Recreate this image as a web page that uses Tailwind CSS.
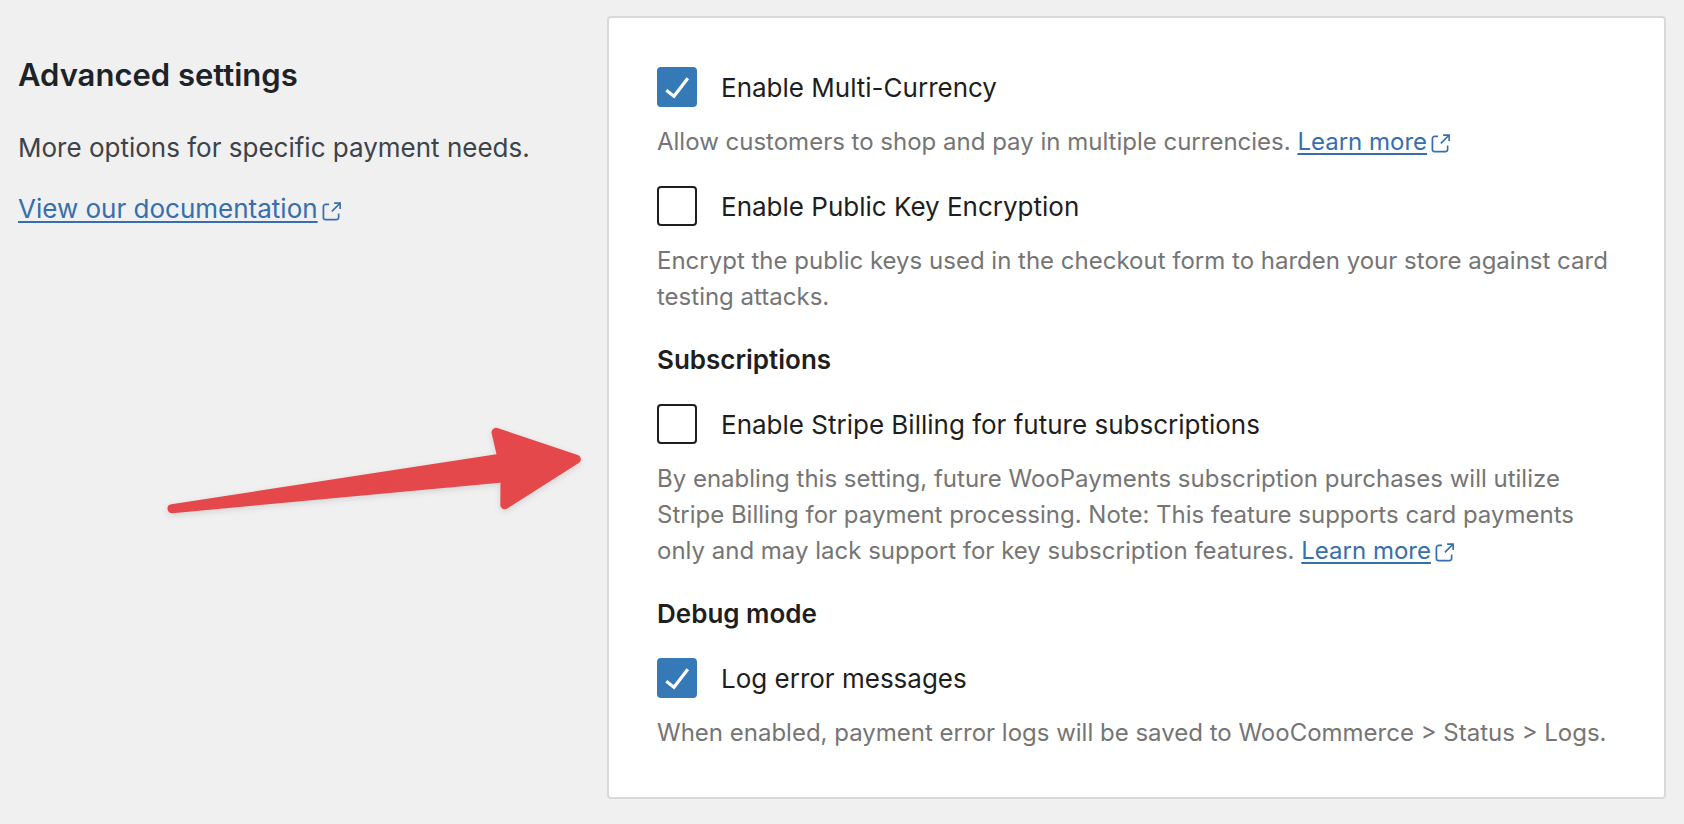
<!DOCTYPE html>
<html lang="en">
<head>
    <meta charset="UTF-8">
    <meta name="viewport" content="width=device-width, initial-scale=1.0">
    <title>Advanced settings</title>
    <script src="https://cdn.jsdelivr.net/npm/@tailwindcss/browser@4"></script>
</head>
<body class="relative min-h-screen bg-[#f0f0f0] font-['Inter','Liberation_Sans',sans-serif] text-[#1e1e1e]">
    <!-- Shared icons -->
    <svg class="hidden">
        <symbol id="external" viewBox="0 0 24 24">
            <path d="M18.2 17c0 .7-.6 1.2-1.2 1.2H7c-.7 0-1.2-.6-1.2-1.2V7c0-.7.6-1.2 1.2-1.2h3.2V4.2H7C5.5 4.2 4.2 5.5 4.2 7v10c0 1.5 1.2 2.8 2.8 2.8h10c1.5 0 2.8-1.2 2.8-2.8v-3.6h-1.5V17zM14.9 3v1.5h3.7l-6.4 6.4 1.1 1.1 6.4-6.4v3.7h1.5V3h-6.3z"></path>
        </symbol>
        <symbol id="check" viewBox="0 0 40 40">
            <path d="M9.3 23.2l7.7 6L30.8 11.2" fill="none" stroke="currentColor" stroke-width="3.2"></path>
        </symbol>
    </svg>

    <main class="flex items-start py-4 pr-[18px]">
        <!-- Section description -->
        <section class="w-[607px] shrink-0 pl-[18px] pr-6 pt-10">
            <h2 class="text-[31px] leading-[38px] font-semibold text-[#1d2327]">Advanced settings</h2>
            <p class="mt-9 text-[26px] leading-9 text-[#3c434a]">More options for specific payment needs.</p>
            <p class="mt-[25px] text-[26px] leading-9 text-[#366eae]">
                <a href="#" class="whitespace-nowrap"><span class="underline decoration-2 underline-offset-3">View our documentation</span><svg class="inline-block size-[26px] fill-current align-[-7px]"><use href="#external"></use></svg></a>
            </p>
        </section>

        <!-- Settings card -->
        <section class="min-w-0 flex-1 rounded border-2 border-[#d9d9d9] bg-white px-12 pb-[46px] pt-[49px]">
            <div>
                <div class="flex items-center gap-6">
                    <span class="grid size-10 shrink-0">
                        <input type="checkbox" id="multiCurrency" checked aria-describedby="multiCurrencyHelp" class="peer col-start-1 row-start-1 size-10 appearance-none rounded border-2 border-[#1e1e1e] bg-white checked:border-[#357ab6] checked:bg-[#357ab6]">
                        <svg class="pointer-events-none invisible col-start-1 row-start-1 size-10 text-white peer-checked:visible"><use href="#check"></use></svg>
                    </span>
                    <label for="multiCurrency" class="pt-0.5 text-[26px] leading-9">Enable Multi-Currency</label>
                </div>
                <p id="multiCurrencyHelp" class="mt-[17px] text-[24px] leading-9 text-[#757575]">Allow customers to shop and pay in multiple currencies. <a href="#" class="whitespace-nowrap text-[#366eae]"><span class="underline decoration-2 underline-offset-3">Learn more</span><svg class="inline-block size-[26px] fill-current align-[-7px]"><use href="#external"></use></svg></a></p>
            </div>

            <div class="mt-[26px]">
                <div class="flex items-center gap-6">
                    <span class="grid size-10 shrink-0">
                        <input type="checkbox" id="publicKey" aria-describedby="publicKeyHelp" class="peer col-start-1 row-start-1 size-10 appearance-none rounded border-2 border-[#1e1e1e] bg-white checked:border-[#357ab6] checked:bg-[#357ab6]">
                        <svg class="pointer-events-none invisible col-start-1 row-start-1 size-10 text-white peer-checked:visible"><use href="#check"></use></svg>
                    </span>
                    <label for="publicKey" class="pt-0.5 text-[26px] leading-9">Enable Public Key Encryption</label>
                </div>
                <p id="publicKeyHelp" class="mt-[17px] text-[24px] leading-9 text-[#757575]">Encrypt the public keys used in the checkout form to harden your store against card testing attacks.</p>
            </div>

            <h4 class="my-7 text-[26px] leading-[33px] font-semibold">Subscriptions</h4>
            <div>
                <div class="flex items-center gap-6">
                    <span class="grid size-10 shrink-0">
                        <input type="checkbox" id="stripeBilling" aria-describedby="stripeBillingHelp" class="peer col-start-1 row-start-1 size-10 appearance-none rounded border-2 border-[#1e1e1e] bg-white checked:border-[#357ab6] checked:bg-[#357ab6]">
                        <svg class="pointer-events-none invisible col-start-1 row-start-1 size-10 text-white peer-checked:visible"><use href="#check"></use></svg>
                    </span>
                    <label for="stripeBilling" class="pt-0.5 text-[26px] leading-9">Enable Stripe Billing for future subscriptions</label>
                </div>
                <p id="stripeBillingHelp" class="mt-[17px] text-[24px] leading-9 text-[#757575]">By enabling this setting, future WooPayments subscription purchases will utilize Stripe Billing for payment processing. Note: This feature supports card payments only and may lack support for key subscription features. <a href="#" class="whitespace-nowrap text-[#366eae]"><span class="underline decoration-2 underline-offset-3">Learn more</span><svg class="inline-block size-[26px] fill-current align-[-7px]"><use href="#external"></use></svg></a></p>
            </div>

            <h4 class="my-7 text-[26px] leading-[33px] font-semibold">Debug mode</h4>
            <div>
                <div class="flex items-center gap-6">
                    <span class="grid size-10 shrink-0">
                        <input type="checkbox" id="logErrors" checked aria-describedby="logErrorsHelp" class="peer col-start-1 row-start-1 size-10 appearance-none rounded border-2 border-[#1e1e1e] bg-white checked:border-[#357ab6] checked:bg-[#357ab6]">
                        <svg class="pointer-events-none invisible col-start-1 row-start-1 size-10 text-white peer-checked:visible"><use href="#check"></use></svg>
                    </span>
                    <label for="logErrors" class="pt-0.5 text-[26px] leading-9">Log error messages</label>
                </div>
                <p id="logErrorsHelp" class="mt-[17px] text-[24px] leading-9 text-[#757575]">When enabled, payment error logs will be saved to WooCommerce &gt; Status &gt; Logs.</p>
            </div>
        </section>
    </main>

    <!-- Arrow pointing at the Stripe Billing option -->
    <svg class="pointer-events-none absolute left-[150px] top-[410px] h-[120px] w-[450px] drop-shadow-[0_2px_3px_rgba(0,0,0,0.12)]" viewBox="0 0 450 120" aria-hidden="true">
        <path d="M22 98.7L352 48L346 22.3L426.3 49.3L354.8 94.8L355 67.8Z" fill="#e4484b" stroke="#e4484b" stroke-width="9" stroke-linejoin="round"></path>
    </svg>
</body>
</html>
